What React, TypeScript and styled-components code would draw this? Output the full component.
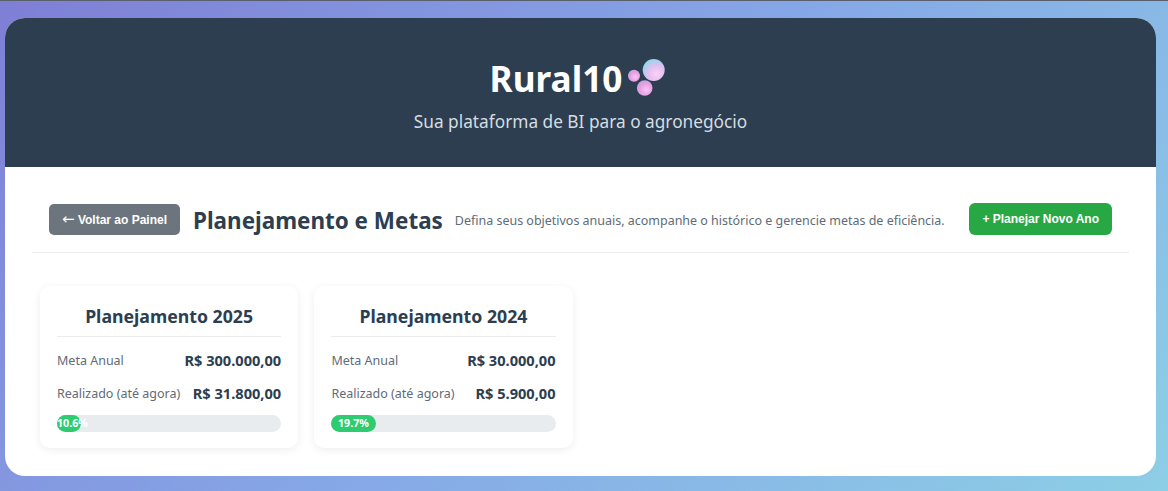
import React from "react";
import styled, { createGlobalStyle } from "styled-components";

const plans = [
  { year: 2025, meta: "R$ 300.000,00", done: "R$ 31.800,00", pct: 10.6 },
  { year: 2024, meta: "R$ 30.000,00", done: "R$ 5.900,00", pct: 19.7 },
];

const Bubbles = () => (
  <BubbleIcon width="44" height="40" viewBox="0 0 44 40" aria-hidden="true">
    <defs>
      <radialGradient id="bubble" cx="0.6" cy="0.6" r="0.65">
        <stop offset="0" stopColor="#f5c8f0" />
        <stop offset="0.6" stopColor="#ea9fe4" />
        <stop offset="1" stopColor="#bfa3e2" />
      </radialGradient>
      <radialGradient id="bubbleBig" cx="0.62" cy="0.68" r="0.75">
        <stop offset="0" stopColor="#f8d4f4" />
        <stop offset="0.5" stopColor="#e5bdf0" />
        <stop offset="1" stopColor="#7fdde8" />
      </radialGradient>
    </defs>
    <circle cx="7" cy="17.7" r="6" fill="url(#bubble)" />
    <circle cx="17.7" cy="30" r="7.8" fill="url(#bubble)" />
    <circle cx="26.7" cy="12" r="11" fill="url(#bubbleBig)" />
  </BubbleIcon>
);

export default function App() {
  return (
    <>
      <GlobalStyle />
      <Page>
        <Shell>
          <Hero>
            <Brand>
              Rural10
              <Bubbles />
            </Brand>
            <Tagline>Sua plataforma de BI para o agronegócio</Tagline>
          </Hero>
          <Main>
            <Toolbar>
              <BackButton>
                <Arrow>←</Arrow> Voltar ao Painel
              </BackButton>
              <Title>Planejamento e Metas</Title>
              <Subtitle>
                Defina seus objetivos anuais, acompanhe o histórico e gerencie
                metas de eficiência.
              </Subtitle>
              <NewButton>+ Planejar Novo Ano</NewButton>
            </Toolbar>
            <Cards>
              {plans.map((p) => (
                <Card key={p.year}>
                  <CardTitle>Planejamento {p.year}</CardTitle>
                  <Row>
                    <Label>Meta Anual</Label>
                    <Value>{p.meta}</Value>
                  </Row>
                  <Row>
                    <Label>Realizado (até agora)</Label>
                    <Value>{p.done}</Value>
                  </Row>
                  <Track>
                    <Fill style={{ width: `${p.pct}%` }}>{p.pct}%</Fill>
                  </Track>
                </Card>
              ))}
            </Cards>
          </Main>
        </Shell>
      </Page>
    </>
  );
}

const GlobalStyle = createGlobalStyle`
  * { box-sizing: border-box; }
  html, body { margin: 0; padding: 0; }
  body {
    font-family: "Noto Sans", "Open Sans", sans-serif;
    color: #2c3e50;
  }
`;

const Page = styled.div`
  height: 491px;
  overflow: hidden;
  padding: 17px 12px 15px 5px;
  border-top: 1px solid #5a5f6e;
  background: linear-gradient(135deg, #7f7fd5, #86a8e7 50%, #91eae4 135%);
`;

const Shell = styled.div`
  height: 458px;
  border-radius: 20px;
  overflow: hidden;
  background: #ffffff;
`;

const Hero = styled.header`
  height: 149px;
  background: #2c3e50;
  color: #ffffff;
  display: flex;
  flex-direction: column;
  align-items: center;
  padding-top: 38px;
`;

const Brand = styled.h1`
  margin: 0;
  height: 44px;
  display: flex;
  align-items: center;
  gap: 5px;
  font-size: 35.2px;
  line-height: 44px;
  font-weight: 700;
`;

const BubbleIcon = styled.svg`
  flex: none;
`;

const Tagline = styled.p`
  margin: 10px 0 0;
  font-size: 17.25px;
  line-height: 24px;
  color: #d5dde2;
`;

const Main = styled.main`
  padding: 36px 27px 0;
`;

const Toolbar = styled.div`
  height: 50px;
  display: flex;
  align-items: flex-start;
  padding: 0 17px;
  margin-bottom: 33px;
  border-bottom: 1px solid #eaecee;
`;

const BackButton = styled.button`
  height: 31px;
  width: 131px;
  margin-top: 1px;
  padding: 0;
  border: 0;
  border-radius: 5px;
  background: #6c757d;
  color: #ffffff;
  font-family: "Liberation Sans", Arial, sans-serif;
  font-size: 12px;
  font-weight: 700;
  white-space: nowrap;
`;

const Arrow = styled.span`
  font-family: "DejaVu Sans", sans-serif;
  font-weight: 400;
  font-size: 15px;
  line-height: 1;
`;

const Title = styled.h2`
  margin: 1px 12px 0 13px;
  font-size: 22.45px;
  line-height: 34px;
  font-weight: 700;
  color: #2c3e50;
  white-space: nowrap;
`;

const Subtitle = styled.p`
  margin: 9px 0 0;
  flex: 1;
  font-size: 12.47px;
  line-height: 18px;
  color: #5f6b76;
  white-space: nowrap;
`;

const NewButton = styled.button`
  height: 32px;
  padding: 0 13px;
  border: 0;
  border-radius: 6px;
  background: #28a745;
  color: #ffffff;
  font-family: "Liberation Sans", Arial, sans-serif;
  font-size: 12px;
  font-weight: 700;
`;

const Cards = styled.div`
  display: flex;
  gap: 16.2px;
  padding-left: 8px;
`;

const Card = styled.article`
  width: 258.2px;
  height: 162px;
  padding: 17px;
  border-radius: 10px;
  background: #ffffff;
  box-shadow: 0 2px 8px rgba(0, 0, 0, 0.07);
`;

const CardTitle = styled.h3`
  margin: 0 0 7px;
  height: 34px;
  border-bottom: 1px solid #eaecee;
  font-size: 17.7px;
  line-height: 27px;
  font-weight: 700;
  text-align: center;
  color: #2c3e50;
`;

const Row = styled.div`
  height: 33px;
  display: flex;
  justify-content: space-between;
  align-items: center;
`;

const Label = styled.span`
  font-size: 12.5px;
  color: #5f6b76;
`;

const Value = styled.span`
  margin-bottom: 2px;
  font-size: 14.6px;
  font-weight: 700;
  color: #2c3e50;
`;

const Track = styled.div`
  height: 17px;
  margin-top: 5px;
  border-radius: 9px;
  background: #e9ecef;
`;

const Fill = styled.div`
  height: 17px;
  border-radius: 9px;
  background: #2ecc71;
  color: #ffffff;
  font-size: 10.7px;
  font-weight: 700;
  line-height: 17px;
  text-align: center;
  white-space: nowrap;
`;
